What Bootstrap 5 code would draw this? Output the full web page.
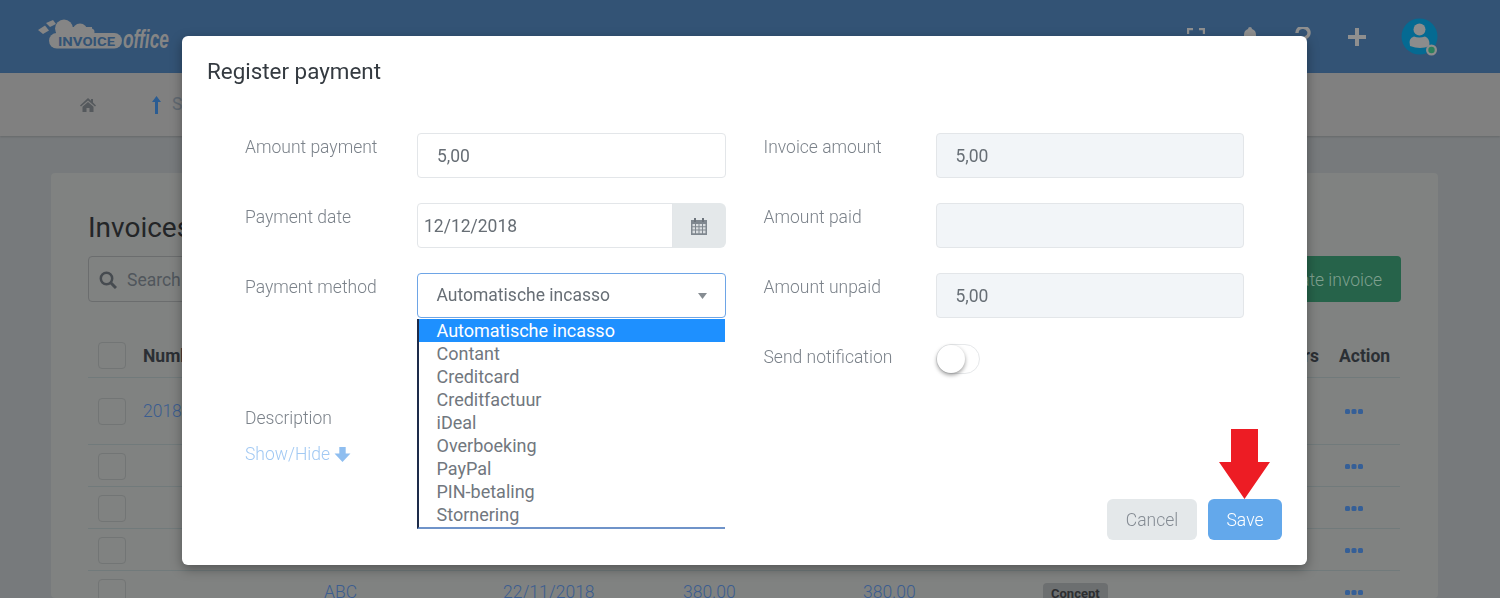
<!doctype html>
<html lang="nl">
<head>
<meta charset="utf-8">
<title>Register payment</title>
<link rel="stylesheet" href="https://cdn.jsdelivr.net/npm/bootstrap@5.3.0/dist/css/bootstrap.min.css">
<style>
html,body{height:598px;overflow:hidden}
body{font-family:Roboto,"Liberation Sans",sans-serif;font-size:17.5px;line-height:27px;background:#777a7c;color:#6b7178}
.top-head{height:73px;background:#335375;padding:0 62px 0 38px}
.logo-text-a{font:700 13.5px Roboto,sans-serif;fill:#335375}
.logo-text-b{font:italic 700 26px "Liberation Sans",sans-serif;fill:#858585}
.top-icons{gap:35.5px}
.sub-nav{height:63px;background:#808080;padding-left:80px;box-shadow:0 1px 2px rgba(0,0,0,.15)}
.sub-link{color:#626a72;margin-left:56px;gap:11px}
.inv-card{margin:37px 62px 0 51px;background:#808281;border-radius:4px;padding:34px 37px 0;height:425px;overflow:hidden}
.inv-title{font-size:28px;font-weight:400;line-height:42px;margin:0 0 7px;color:#232527}
.search-box{width:320px;height:46px;border:1px solid #6b6d6e;border-radius:4px;padding:2px 0 0 10px;gap:10px;color:#50565c}
.create-btn{height:46px;background:#26634a;color:#7fa08f;border:0;border-radius:4px;width:156px;font-weight:300;font-size:17.5px;text-align:right;padding:2px 19px 0}
.inv-table{margin-top:33px;width:1312px;table-layout:fixed;--bs-table-bg:transparent;--bs-table-color:#3b5d90;color:#3b5d90;border-color:#717a7b;font-weight:300;margin-bottom:0}
.inv-table th{height:42px;padding:2px 10px 0;font-weight:700;color:#2b2f34;vertical-align:middle;border-bottom:1px solid #717a7b;white-space:nowrap}
.inv-table td{height:42px;padding:2px 10px 0;vertical-align:middle;border-bottom:1px solid #717a7b;white-space:nowrap}
.inv-table th .tick-box{margin-top:-2px}
.inv-table tr.tall-row td{height:67px}
.c1{width:45px}.c2{width:181px}.c3{width:179px}.c4,.c5,.c6,.c7{width:180px}.c8{width:116px}.c9{width:71px}
.tick-box{display:block;width:28px;height:27px;border:1px solid #727575;border-radius:4px}
.dots-ic{display:block;margin-left:6px}
.state-tag{display:inline-block;background:#6c6f70;color:#2c2e30;font-size:13px;font-weight:700;border-radius:4px;padding:3px 8px;line-height:15px}
.pay-dialog{max-width:none;width:1125px;margin:36px 0 0 182px}
.pay-content{height:529px;border:0;border-radius:6px;box-shadow:0 4px 12px rgba(0,0,0,.35);position:relative;font-weight:300;color:#6d747c}
.pay-title{font-size:22.4px;font-weight:400;line-height:30px;color:#343a40;margin:0;padding:20px 25px 0}
.pay-grid{display:grid;grid-template-columns:1fr 1fr;column-gap:38px;padding:47px 63px 0;line-height:27px}
.pay-row{display:flex;margin-bottom:25px}
.pay-row>label{width:172px;flex:none;margin:0;padding-top:1px;color:#7b828a}
.pay-input{height:45px;font-size:17.5px;font-weight:400;color:#676e75;border:1px solid #e3e6e9;border-radius:4px;padding:0 19px;flex:1;min-width:0}
.pay-input:disabled{background:#f2f5f8;opacity:1}
.date-group{flex:1;width:auto;min-width:0}
.date-input{padding:0 6px}
.date-addon{width:54px;background:#e4e8ea;border:0;justify-content:center;padding:0}
.sel-wrap{position:relative;flex:1;min-width:0}
.sel-box{height:45px;display:flex;align-items:center;justify-content:space-between;font-size:17.5px;font-weight:400;color:#676e75;border:1px solid #6ea5e6;border-radius:4px;padding:0 18px 0 18.500px}
.sel-menu{position:absolute;left:0;right:1px;top:46px;height:210px;background:#fff;border-left:2px solid #1d2b4a;border-bottom:2px solid #6f93c9;margin:0;padding:0;list-style:none;font-weight:400;font-size:18px;line-height:23px;color:#71777e;z-index:2}
.sel-menu li{padding-left:17.500px;height:23px}
.sel-menu li.sel-on{background:#1e90ff;color:#fff}
.note-row{margin-bottom:87px}
.desc-row{height:36px;color:#7b828a}
.show-hide{color:#a2c9f3;display:flex;align-items:center;gap:4px;text-decoration:none}
.tog{display:block;width:44px;height:30px;margin-top:1px;border:1px solid #e6e8ea;border-radius:15px;position:relative;background:#fff}
.tog::after{content:"";position:absolute;left:0;top:0;width:28px;height:28px;border-radius:50%;background:#fff;box-shadow:0 2px 4px rgba(0,0,0,.4)}
.pay-foot{position:absolute;right:25px;bottom:25px;gap:11px}
.btn-x{height:41px;width:90px;background:#e4e8ea;border:0;color:#848b93;font-size:17.5px;font-weight:300;padding:1px 0 0}
.btn-s{height:41px;width:74px;background:#63a8eb;border:0;color:#fff;font-size:17.5px;font-weight:300;padding:1px 0 0}
.red-arrow{position:absolute;left:1037px;top:393px}
</style>
</head>
<body>
<header class="top-head d-flex align-items-center justify-content-between">
  <svg width="136" height="40" viewBox="0 0 136 40" aria-label="InvoiceOffice">
    <g fill="#858585">
      <rect x="11" y="16" width="73" height="15.500" rx="7.700"/>
      <circle cx="26" cy="11.500" r="9"/>
      <circle cx="42" cy="14" r="7.500"/>
      <circle cx="53" cy="15" r="3.500"/>
      <rect x="18" y="10" width="36" height="10"/>
      <path d="M0 13 7 8.500 11 13.500 5 17zM8 6l7-3 3 4-6 3z"/>
    </g>
    <text x="20" y="29" class="logo-text-a" textLength="57" lengthAdjust="spacingAndGlyphs">INVOICE</text>
    <text x="85" y="31" class="logo-text-b" textLength="46" lengthAdjust="spacingAndGlyphs">office</text>
  </svg>
  <div class="top-icons d-flex align-items-center">
    <svg width="18" height="18" viewBox="0 0 18 18"><path d="M1 6V1H6M12 1H17V6M17 12V17H12M6 17H1V12" fill="none" stroke="#8f8f8f" stroke-width="2.400"/></svg>
    <svg width="18" height="20" viewBox="0 0 18 20"><path d="M9 0a2 2 0 0 1 2 2c3 .8 4 3.500 4 6 0 4 1 5 3 7H0c2-2 3-3 3-7 0-2.500 1-5.200 4-6a2 2 0 0 1 2-2z" fill="#8f8f8f"/></svg>
    <svg width="18" height="20" viewBox="0 0 18 20"><path d="M3 6a6 5.500 0 1 1 9 4.500c-2 1.200-2.500 1.800-2.500 3.500" fill="none" stroke="#8f8f8f" stroke-width="3.400"/><rect x="7.500" y="16" width="4" height="4" fill="#8f8f8f"/></svg>
    <svg width="18" height="18" viewBox="0 0 18 18"><path d="M7 0h4v7h7v4h-7v7H7v-7H0V7h7z" fill="#8f8f8f"/></svg>
    <svg width="37" height="38" viewBox="0 0 37 38"><circle cx="18.500" cy="18.500" r="18" fill="#056a92"/><circle cx="18.500" cy="11.500" r="6" fill="#8c8c8c"/><path d="M9 28q-2-8 4-9.500 5 2 11 0 5 1.500 4.500 9.500-9 4-19.500 0z" fill="#8c8c8c"/><circle cx="30.500" cy="32" r="5.500" fill="#8c8c8c"/><circle cx="30.500" cy="32" r="3.200" fill="#2c7f5c"/></svg>
  </div>
</header>
<nav class="sub-nav d-flex align-items-center">
  <svg width="16" height="14" viewBox="0 0 16 14"><path d="M8 0 11 2.700V1h2v3.500L16 7.500 15 8.500 8 2.500 1 8.500 0 7.500zM8 4l5.500 4.700V14H9.500V10h-3v4H2.500V8.700z" fill="#55595d"/></svg>
  <a class="sub-link d-flex align-items-center text-decoration-none"><svg width="9" height="18" viewBox="0 0 9 18"><path d="M4.500 0 9 6H6V18H3V6H0z" fill="#2b5c92"/></svg>Sales</a>
</nav>
<main class="inv-card">
  <h1 class="inv-title">Invoices</h1>
  <div class="d-flex justify-content-between">
    <div class="search-box d-flex align-items-center">
      <svg width="18" height="18" viewBox="0 0 18 18"><circle cx="7.500" cy="7.500" r="5.700" fill="none" stroke="#464b50" stroke-width="2.500"/><path d="m12 12 5 5" stroke="#464b50" stroke-width="3"/></svg>Search
    </div>
    <button class="btn create-btn" type="button">Create invoice</button>
  </div>
  <table class="table inv-table">
    <colgroup><col class="c1"><col class="c2"><col class="c3"><col class="c4"><col class="c5"><col class="c6"><col class="c7"><col class="c8"><col class="c9"></colgroup>
    <thead><tr><th><span class="tick-box"></span></th><th>Number</th><th></th><th></th><th></th><th></th><th></th><th class="text-end">Reminders</th><th>Action</th></tr></thead>
    <tbody>
      <tr class="tall-row"><td><span class="tick-box"></span></td><td>20180001</td><td></td><td></td><td></td><td></td><td></td><td></td><td><svg class="dots-ic" width="18" height="5" viewBox="0 0 18 5"><rect width="5" height="5" rx="1.500" fill="#355f97"/><rect x="6.500" width="5" height="5" rx="1.500" fill="#355f97"/><rect x="13" width="5" height="5" rx="1.500" fill="#355f97"/></svg></td></tr>
      <tr><td><span class="tick-box"></span></td><td></td><td></td><td></td><td></td><td></td><td></td><td></td><td><svg class="dots-ic" width="18" height="5" viewBox="0 0 18 5"><rect width="5" height="5" rx="1.500" fill="#355f97"/><rect x="6.500" width="5" height="5" rx="1.500" fill="#355f97"/><rect x="13" width="5" height="5" rx="1.500" fill="#355f97"/></svg></td></tr>
      <tr><td><span class="tick-box"></span></td><td></td><td></td><td></td><td></td><td></td><td></td><td></td><td><svg class="dots-ic" width="18" height="5" viewBox="0 0 18 5"><rect width="5" height="5" rx="1.500" fill="#355f97"/><rect x="6.500" width="5" height="5" rx="1.500" fill="#355f97"/><rect x="13" width="5" height="5" rx="1.500" fill="#355f97"/></svg></td></tr>
      <tr><td><span class="tick-box"></span></td><td></td><td></td><td></td><td></td><td></td><td></td><td></td><td><svg class="dots-ic" width="18" height="5" viewBox="0 0 18 5"><rect width="5" height="5" rx="1.500" fill="#355f97"/><rect x="6.500" width="5" height="5" rx="1.500" fill="#355f97"/><rect x="13" width="5" height="5" rx="1.500" fill="#355f97"/></svg></td></tr>
      <tr><td><span class="tick-box"></span></td><td></td><td>ABC</td><td>22/11/2018</td><td>380.00</td><td>380.00</td><td><span class="state-tag">Concept</span></td><td></td><td><svg class="dots-ic" width="18" height="5" viewBox="0 0 18 5"><rect width="5" height="5" rx="1.500" fill="#355f97"/><rect x="6.500" width="5" height="5" rx="1.500" fill="#355f97"/><rect x="13" width="5" height="5" rx="1.500" fill="#355f97"/></svg></td></tr>
    </tbody>
  </table>
</main>

<div class="modal d-block" tabindex="-1">
  <div class="modal-dialog pay-dialog">
    <div class="modal-content pay-content">
      <h5 class="pay-title">Register payment</h5>
      <div class="pay-grid">
        <div>
          <div class="pay-row"><label>Amount payment</label><input class="form-control pay-input" value="5,00"></div>
          <div class="pay-row"><label>Payment date</label>
            <div class="input-group date-group">
              <input class="form-control pay-input date-input" value="12/12/2018">
              <span class="input-group-text date-addon"><svg width="18" height="18" viewBox="0 0 18 18"><path d="M1 3h16v15H1z" fill="#7f878f"/><path d="M4 1h2v4H4zM12 1h2v4h-2z" fill="#6d747c"/><path d="M2.500 7H5v2.200H2.500zM6 7h2.500v2.200H6zM9.500 7H12v2.200H9.500zM13 7h2.500v2.200H13zM2.500 10.200H5v2.200H2.500zM6 10.200h2.500v2.200H6zM9.500 10.200H12v2.200H9.500zM13 10.200h2.500v2.200H13zM2.500 13.400H5v2.800H2.500zM6 13.400h2.500v2.800H6zM9.500 13.400H12v2.800H9.500zM13 13.400h2.500v2.800H13z" fill="#d9dde0"/></svg></span>
            </div>
          </div>
          <div class="pay-row note-row"><label>Payment method</label>
            <div class="sel-wrap">
              <div class="sel-box"><span>Automatische incasso</span><svg width="9" height="6" viewBox="0 0 9 6"><path d="M0 0h9L4.500 6z" fill="#868c92"/></svg></div>
              <ul class="sel-menu">
                <li class="sel-on">Automatische incasso</li><li>Contant</li><li>Creditcard</li><li>Creditfactuur</li><li>iDeal</li><li>Overboeking</li><li>PayPal</li><li>PIN-betaling</li><li>Stornering</li>
              </ul>
            </div>
          </div>
          <div class="desc-row">Description</div>
          <a class="show-hide">Show/Hide <svg width="17" height="15" viewBox="0 0 16 14"><path d="M5 0h6v6h4.500L8 14 .5 6H5z" fill="#8fbef0"/></svg></a>
        </div>
        <div>
          <div class="pay-row"><label>Invoice amount</label><input class="form-control pay-input" value="5,00" disabled></div>
          <div class="pay-row"><label>Amount paid</label><input class="form-control pay-input" disabled></div>
          <div class="pay-row"><label>Amount unpaid</label><input class="form-control pay-input" value="5,00" disabled></div>
          <div class="pay-row"><label>Send notification</label><span class="tog"></span></div>
        </div>
      </div>
      <div class="pay-foot d-flex justify-content-end">
        <button class="btn btn-x" type="button">Cancel</button>
        <button class="btn btn-s" type="button">Save</button>
      </div>
      <svg class="red-arrow" width="51" height="70" viewBox="0 0 51 70"><path d="M12 0h27v33h12L25.500 70 0 33h12z" fill="#ed1c24"/></svg>
    </div>
  </div>
</div>
<script src="https://cdn.jsdelivr.net/npm/bootstrap@5.3.0/dist/js/bootstrap.bundle.min.js"></script>
</body>
</html>
